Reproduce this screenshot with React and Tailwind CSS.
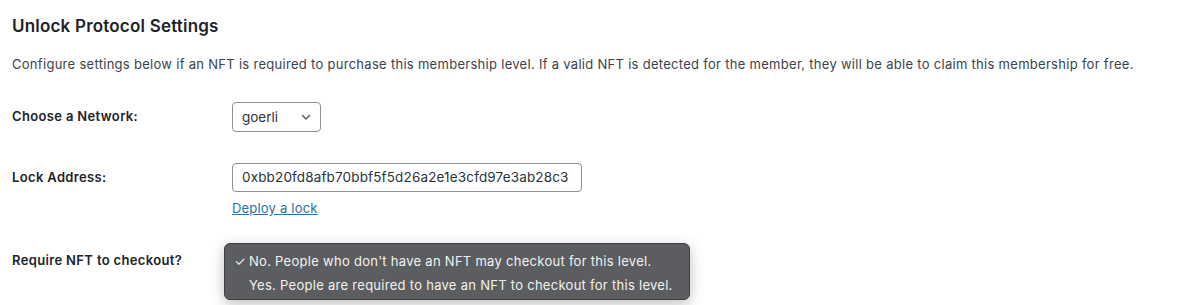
import React from 'react';

const App = () => {
    return (
        <div className="bg-white w-[1193px] h-[305px] overflow-hidden text-[#3c434a] px-3 font-['Inter',sans-serif]">
            {/* Heading */}
            <h2 className="text-[17px] font-semibold text-[#1d2327] pt-[15px] leading-[22px] tracking-[0.2px]">Unlock Protocol Settings</h2>
            <p className="text-[13px] leading-[18px] mt-[18px] tracking-[0.29px]">
                Configure settings below if an NFT is required to purchase this membership level. If a valid NFT is detected for the member, they will be able to claim this membership for free.
            </p>

            <div className="mt-[29px] flex flex-col">
                {/* Network */}
                <div className="flex items-center h-[30px]">
                    <span className="w-[220px] text-[13px] font-semibold text-[#1d2327] tracking-[0.35px]">Choose a Network:</span>
                    <div className="w-[89px] h-[30px] border border-[#8c8f94] rounded-[4px] flex items-center justify-between pl-[9px] pr-[8px] text-[13.5px] text-[#2c3338]">
                        <span>goerli</span>
                        <svg width="12" height="12" viewBox="0 0 12 12" fill="none" stroke="#50575e" strokeWidth="1.4" strokeLinecap="round" strokeLinejoin="round">
                            <path d="M2.5 4.5 L6 8 L9.5 4.5" />
                        </svg>
                    </div>
                </div>

                {/* Lock address */}
                <div className="flex mt-[31px]">
                    <span className="w-[220px] text-[13px] font-semibold text-[#1d2327] leading-[29px] tracking-[0.35px]">Lock Address:</span>
                    <div className="flex flex-col">
                        <div className="w-[350px] h-[29px] border border-[#8c8f94] rounded-[4px] flex items-center px-[9px] text-[13.5px] text-[#2c3338] tracking-[0.15px]">
                            0xbb20fd8afb70bbf5f5d26a2e1e3cfd97e3ab28c3
                        </div>
                        <a href="#" className="text-[13px] text-[#2271b1] underline leading-[18px] mt-[7px] w-fit tracking-[0.2px]">Deploy a lock</a>
                    </div>
                </div>

                {/* Require NFT */}
                <div className="flex mt-[32px] relative">
                    <span className="w-[220px] text-[13px] font-semibold text-[#1d2327] leading-[22px] tracking-[0.35px]">Require NFT to checkout?</span>
                    <div className="absolute left-[212px] top-[-6px] w-[466px] h-[57px] bg-[#5c5d60] border border-[#3e3f41] rounded-[6px] shadow-[0_4px_14px_rgba(0,0,0,0.25)] text-[13px] text-[#f2f2f2] pt-[5px] tracking-[0.28px]">
                        <div className="flex items-center h-[24px] leading-[24px]">
                            <span className="w-[24px] text-right pr-[3px]">✓</span>
                            <span>No. People who don't have an NFT may checkout for this level.</span>
                        </div>
                        <div className="flex items-center h-[24px] leading-[24px]">
                            <span className="w-[24px]"></span>
                            <span>Yes. People are required to have an NFT to checkout for this level.</span>
                        </div>
                    </div>
                </div>
            </div>
        </div>
    );
};

export default App;
